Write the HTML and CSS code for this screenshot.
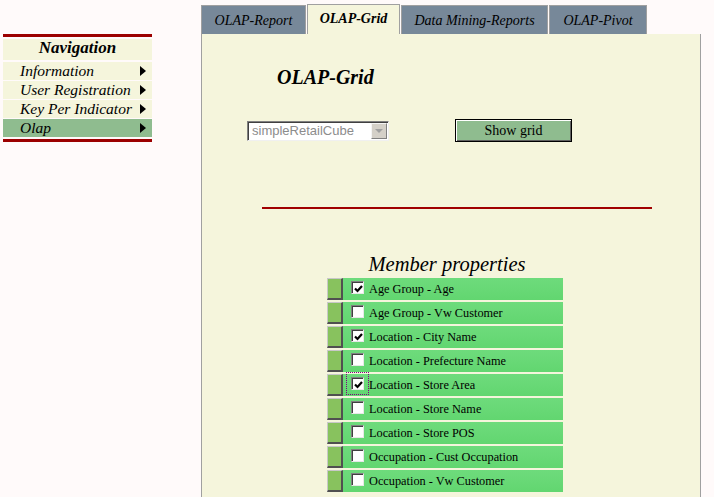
FILE: index.html
```html
<!DOCTYPE html>
<html>
<head>
<meta charset="utf-8">
<title>OLAP-Grid</title>
<link rel="stylesheet" href="styles.css">
</head>
<body>
<div class="page">
  <nav class="nav">
    <div class="nav-bar"></div>
    <div class="nav-head">Navigation</div>
    <div class="nav-item"><span>Information</span><i class="arrow"></i></div>
    <div class="nav-item"><span>User Registration</span><i class="arrow"></i></div>
    <div class="nav-item"><span>Key Per Indicator</span><i class="arrow"></i></div>
    <div class="nav-item nav-active"><span>Olap</span><i class="arrow"></i></div>
    <div class="nav-bar nav-bar-bottom"></div>
  </nav>
  <main class="main">
    <div class="tabs">
      <div class="tab tab-w1">OLAP-Report</div>
      <div class="tab tab-w2 tab-active">OLAP-Grid</div>
      <div class="tab tab-w3">Data Mining-Reports</div>
      <div class="tab tab-w4">OLAP-Pivot</div>
    </div>
    <div class="panel">
      <h2 class="title">OLAP-Grid</h2>
      <div class="controls">
        <div class="select"><span class="select-text">simpleRetailCube</span><span class="select-btn"><i class="down"></i></span></div>
        <div class="btn">Show grid</div>
      </div>
      <div class="rule"></div>
      <div class="members">
        <div class="members-title">Member properties</div>
        <div class="row"><span class="handle"></span><span class="cb on"><svg viewBox="0 0 9 9" width="9" height="9"><path d="M1 4.5 L3.5 7 L8 2" fill="none" stroke="#000" stroke-width="2.2"/></svg></span><span class="label">Age Group - Age</span></div>
        <div class="row"><span class="handle"></span><span class="cb"></span><span class="label">Age Group - Vw Customer</span></div>
        <div class="row"><span class="handle"></span><span class="cb on"><svg viewBox="0 0 9 9" width="9" height="9"><path d="M1 4.5 L3.5 7 L8 2" fill="none" stroke="#000" stroke-width="2.2"/></svg></span><span class="label">Location - City Name</span></div>
        <div class="row"><span class="handle"></span><span class="cb"></span><span class="label">Location - Prefecture Name</span></div>
        <div class="row"><span class="handle"></span><span class="cb on focus"><svg viewBox="0 0 9 9" width="9" height="9"><path d="M1 4.5 L3.5 7 L8 2" fill="none" stroke="#000" stroke-width="2.2"/></svg></span><span class="label">Location - Store Area</span></div>
        <div class="row"><span class="handle"></span><span class="cb"></span><span class="label">Location - Store Name</span></div>
        <div class="row"><span class="handle"></span><span class="cb"></span><span class="label">Location - Store POS</span></div>
        <div class="row"><span class="handle"></span><span class="cb"></span><span class="label">Occupation - Cust Occupation</span></div>
        <div class="row"><span class="handle"></span><span class="cb"></span><span class="label">Occupation - Vw Customer</span></div>
      </div>
    </div>
  </main>
</div>
</body>
</html>
```

FILE: styles.css
```css
html, body {
  margin: 0;
  padding: 0;
  background: #fffafa;
  overflow: hidden;
  font-family: "Liberation Serif", "Times New Roman", serif;
  color: #000;
}

.page {
  display: flex;
  align-items: flex-start;
}

/* Navigation */
.nav {
  width: 149px;
  margin: 34px 0 0 3px;
  display: flex;
  flex-direction: column;
}
.nav-bar {
  height: 3px;
  background: #9c0000;
}
.nav-bar-bottom {
  margin-top: 2px;
}
.nav-head {
  margin-top: 2px;
  height: 21px;
  box-sizing: border-box;
  padding-bottom: 3px;
  background: #f5f5dc;
  font-size: 17px;
  line-height: 18px;
  font-weight: bold;
  font-style: italic;
  text-align: center;
}
.nav-item {
  margin-top: 1px;
  height: 18px;
  background: #f5f5dc;
  font-size: 15.5px;
  line-height: 18px;
  font-style: italic;
  display: flex;
  align-items: center;
  justify-content: space-between;
  padding: 0 6px 0 17px;
}
.nav-head + .nav-item {
  margin-top: 2px;
}
.nav-active {
  background: #8fbc8f;
}
.arrow {
  width: 0;
  height: 0;
  border-left: 6px solid #000;
  border-top: 5px solid transparent;
  border-bottom: 5px solid transparent;
}

/* Main */
.main {
  margin-left: 49px;
  width: 500px;
}
.tabs {
  height: 34px;
  display: flex;
  align-items: flex-end;
  gap: 1px;
}
.tab {
  box-sizing: border-box;
  height: 29px;
  border: 1px solid #a0a0a0;
  border-bottom: none;
  background: #778899;
  font-size: 14px;
  font-style: italic;
  display: flex;
  align-items: center;
  justify-content: center;
  padding-top: 1px;
}
.tab-w1 { width: 105px; }
.tab-w2 { width: 93px; }
.tab-w3 { width: 147px; }
.tab-w4 { width: 98px; }
.tab-active {
  height: 30px;
  background: #f5f5dc;
  font-weight: bold;
  padding-bottom: 2px;
}

.panel {
  box-sizing: border-box;
  height: calc(100vh - 34px);
  background: #f5f5dc;
  border-left: 1px solid #a0a0a0;
  border-right: 1px solid #a0a0a0;
  overflow: hidden;
}
.title {
  margin: 32px 0 0 75px;
  font-size: 20px;
  line-height: 22px;
  font-weight: bold;
  font-style: italic;
}
.controls {
  margin-top: 31px;
  display: flex;
  align-items: center;
  height: 23px;
}
.select {
  box-sizing: border-box;
  margin-left: 45px;
  width: 142px;
  height: 20px;
  background: #fff;
  border: 1px solid;
  border-color: #808080 #f0f0f0 #f0f0f0 #808080;
  box-shadow: inset 1px 1px 0 #404040;
  display: flex;
  align-items: center;
  justify-content: space-between;
  padding: 0 1px 0 4px;
}
.select-text {
  font-family: "Liberation Sans", Arial, sans-serif;
  font-size: 13px;
  color: #8c8c8c;
}
.select-btn {
  box-sizing: border-box;
  width: 16px;
  height: 16px;
  margin-top: 1px;
  background: #d4d0c8;
  border: 1px solid;
  border-color: #f4f4f4 #808080 #808080 #f4f4f4;
  display: flex;
  align-items: center;
  justify-content: center;
}
.down {
  width: 0;
  height: 0;
  border-top: 4px solid #a0a0a0;
  border-left: 4px solid transparent;
  border-right: 4px solid transparent;
}
.btn {
  box-sizing: border-box;
  margin-left: 66px;
  width: 117px;
  height: 23px;
  background: #8fbc8f;
  border: 1px solid #000;
  box-shadow: inset 1px 1px 0 #fff, inset -1px -1px 0 #606060;
  font-size: 14px;
  line-height: 21px;
  text-align: center;
}
.rule {
  margin: 65px 0 0 60px;
  width: 390px;
  height: 2px;
  background: #a00000;
}
.members {
  margin: 43px 0 0 125px;
  width: 236px;
}
.members-title {
  font-size: 20.5px;
  line-height: 24px;
  font-style: italic;
  text-align: center;
  padding-left: 4px;
  margin-bottom: 2px;
}
.row {
  height: 22px;
  margin-bottom: 2px;
  background: linear-gradient(#6edb7c, #62d670);
  display: flex;
  align-items: flex-start;
}
.handle {
  box-sizing: border-box;
  width: 16px;
  height: 22px;
  background: #88c25e;
  border-style: solid;
  border-width: 1px 2px 2px 1px;
  border-color: #c8c8c8 #505050 #505050 #c8c8c8;
}
.cb {
  box-sizing: border-box;
  width: 13px;
  height: 13px;
  margin: 3px 0 0 8px;
  background: #fff;
  border: 1px solid;
  border-color: #808080 #e8e8e8 #e8e8e8 #808080;
  box-shadow: inset 1px 1px 0 #404040;
  display: flex;
  align-items: center;
  justify-content: center;
}
.cb svg {
  display: block;
  margin: 1px 0 0 1px;
}
.focus {
  outline: 1px dotted #800080;
  outline-offset: 4px;
}
.label {
  margin-left: 5px;
  font-size: 12.3px;
  line-height: 22px;
  color: #000;
}
```
